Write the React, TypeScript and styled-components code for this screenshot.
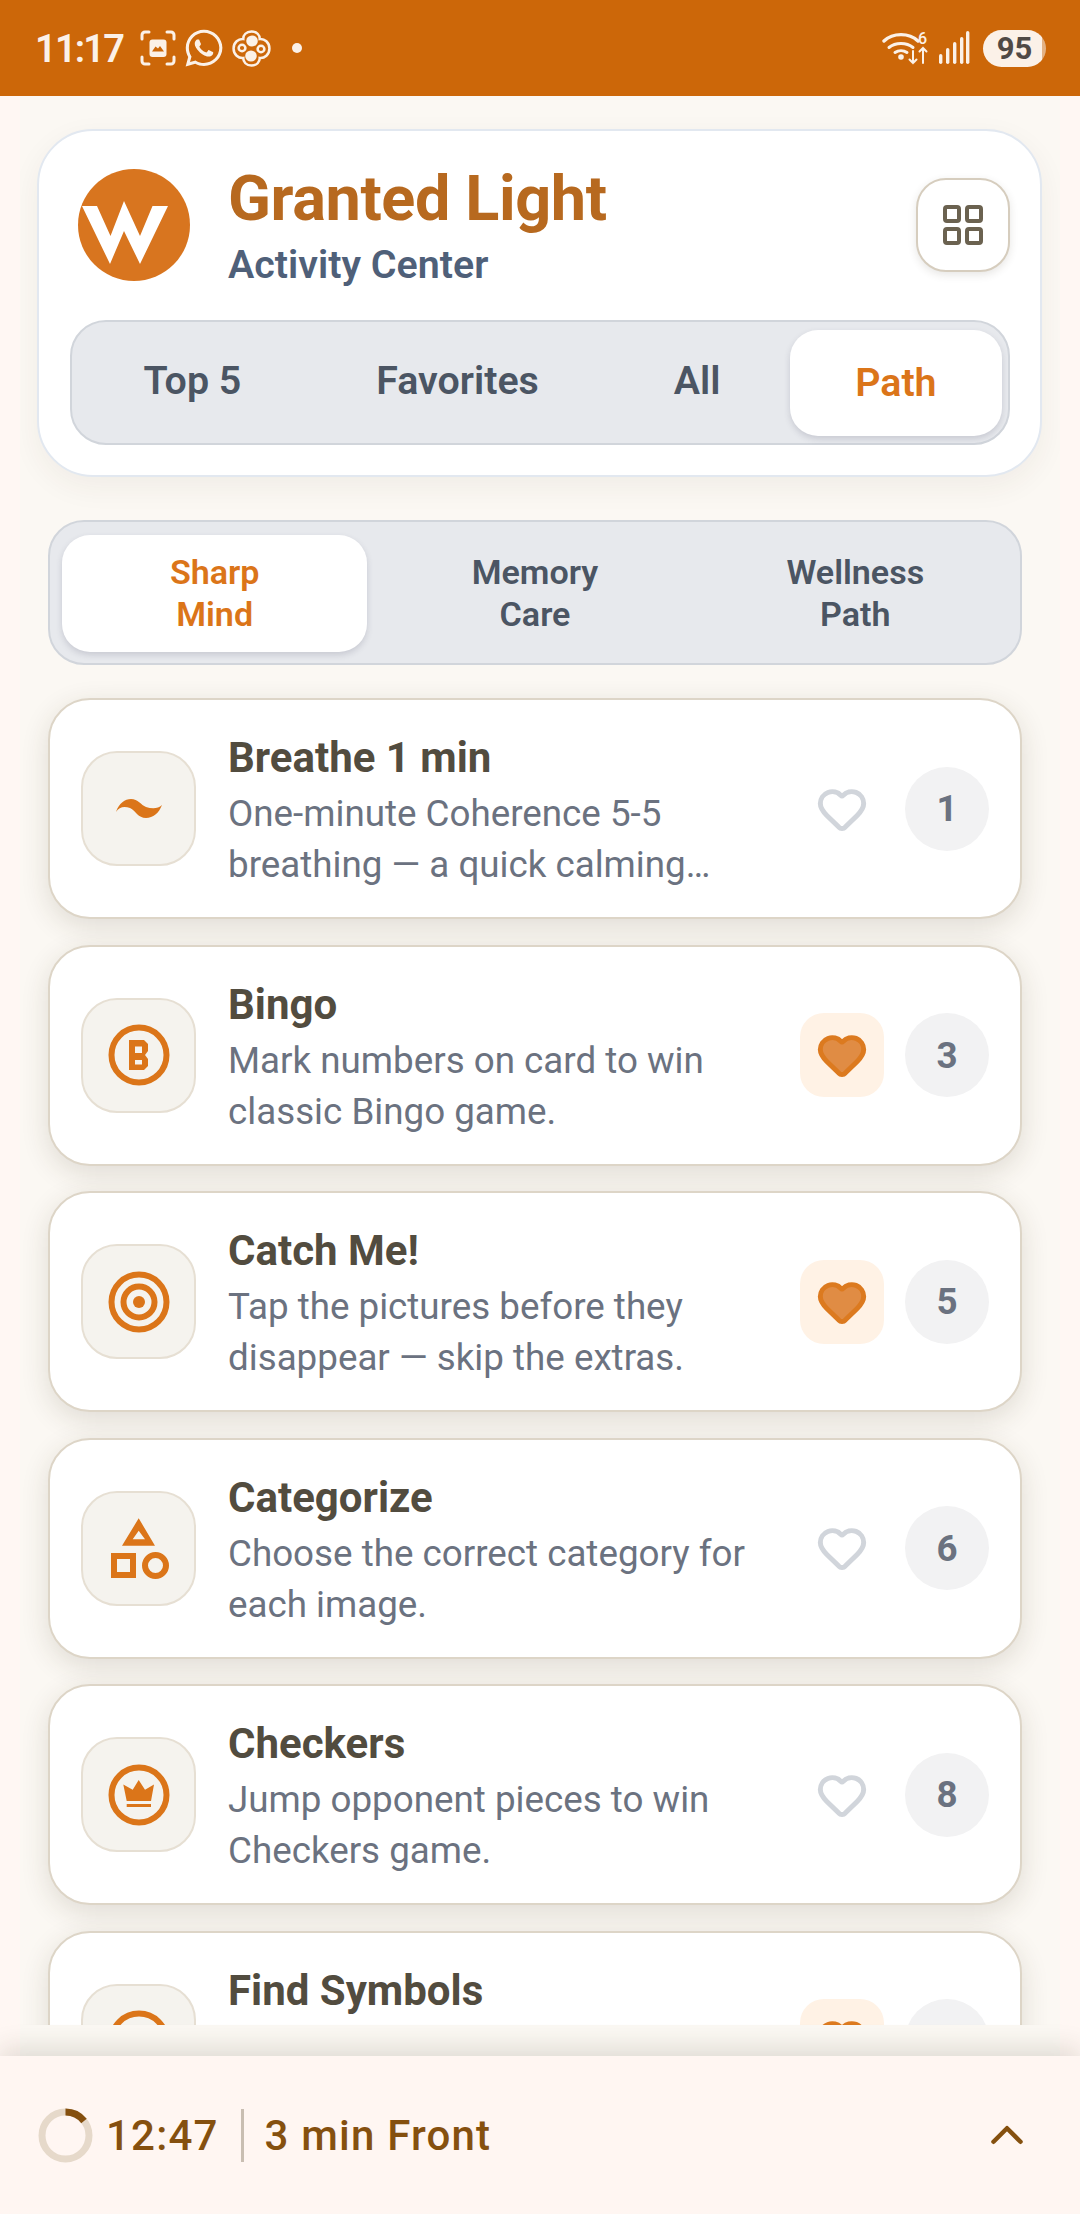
import React from 'react';
import styled, {createGlobalStyle} from 'styled-components';
import {ChevronUp, Heart, LayoutGrid} from 'lucide-react';
import {FaWhatsapp} from 'react-icons/fa';

const orange = '#DB7519';
const brown = '#85500F';
const slate = '#4B5563';

const GlobalStyle = createGlobalStyle`
  html, body {
    margin: 0;
    padding: 0;
    background: #FFF7F3;
  }
  * {
    box-sizing: border-box;
  }
`;

const Screen = styled.div`
  width: 1080px;
  height: 2214px;
  display: flex;
  flex-direction: column;
  overflow: hidden;
  font-family: Roboto, "Liberation Sans", sans-serif;
  background: #FFF7F3;
`;

const StatusBar = styled.div`
  height: 96px;
  flex: none;
  display: flex;
  align-items: center;
  padding: 0 34px 0 35px;
  background: #CC6709;
  color: #FBF1E8;
`;

const Clock = styled.div`
  width: 86px;
  font-size: 38px;
  font-weight: 600;
  letter-spacing: -1.8px;
  margin-right: 19px;
  margin-top: 2px;
  white-space: nowrap;
`;

const StatusIcons = styled.div`
  display: flex;
  align-items: center;
  gap: 7px;
`;

const StatusDot = styled.div`
  width: 10px;
  height: 10px;
  border-radius: 50%;
  background: #FBF1E8;
  margin-left: 21px;
`;

const StatusRight = styled.div`
  margin-left: auto;
  display: flex;
  align-items: center;
  gap: 9px;
`;

const Battery = styled.div`
  width: 63px;
  height: 37px;
  margin-left: 4px;
  border-radius: 19px;
  display: flex;
  align-items: center;
  justify-content: center;
  font-size: 31px;
  font-weight: 700;
  color: #504A46;
  background: linear-gradient(90deg, #FBF1E8 94%, #E3B285 94%);
`;

const Main = styled.div`
  flex: 1;
  min-height: 0;
  margin: 0 20px;
  display: flex;
  flex-direction: column;
  background: #FBF8F3;
`;

const Scroll = styled.div`
  flex: 1;
  min-height: 0;
  overflow: hidden;
  padding: 33px 18px 0 17px;
`;

const BottomStrip = styled.div`
  flex: none;
  height: 31px;
  background: #FBF8F3;
`;

const HeaderCard = styled.div`
  height: 348px;
  padding: 38px 30px 30px 31px;
  background: #fff;
  border: 2px solid #E2E8F0;
  border-radius: 56px;
  box-shadow: 0 10px 30px rgba(60, 50, 30, 0.06);
`;

const HeaderTop = styled.div`
  display: flex;
  align-items: flex-start;
  height: 112px;
  margin-left: 8px;
`;

const Titles = styled.div`
  margin-left: 38px;
  flex: 1;
`;

const Title = styled.div`
  font-size: 63px;
  line-height: 62px;
  font-weight: 700;
  letter-spacing: -0.4px;
  color: #B7691F;
  margin-top: -1px;
`;

const Subtitle = styled.div`
  font-size: 39.4px;
  line-height: 48px;
  font-weight: 600;
  color: #4F6079;
  margin-top: 11px;
`;

const GridButton = styled.div`
  width: 94px;
  height: 94px;
  margin: 9px 0 0 0;
  border-radius: 30px;
  border: 2px solid #D6CDBE;
  background: #fff;
  display: flex;
  align-items: center;
  justify-content: center;
  color: #6B6250;
  box-shadow: 0 3px 8px rgba(60, 50, 30, 0.12);
`;

const MainTabs = styled.div`
  margin-top: 39px;
  height: 125px;
  display: flex;
  gap: 4px;
  padding: 8px 6px 7px 6px;
  background: #E7E9ED;
  border: 2px solid #D1D5DB;
  border-radius: 36px;
`;

const MainTab = styled.div<{$active?: boolean}>`
  flex: 1 1 auto;
  display: flex;
  align-items: center;
  justify-content: center;
  padding: 0 58px ${p => (p.$active ? '2px' : '5px')};
  border-radius: 28px;
  font-size: 39.4px;
  font-weight: 600;
  color: ${p => (p.$active ? orange : slate)};
  background: ${p => (p.$active ? '#fff' : 'transparent')};
  box-shadow: ${p => (p.$active ? '0 3px 6px rgba(60, 60, 90, 0.18)' : 'none')};
`;

const SubTabs = styled.div`
  margin: 43px 0 0 11px;
  width: 974px;
  height: 145px;
  display: grid;
  grid-template-columns: repeat(3, 1fr);
  gap: 15px;
  padding: 13px 12px 11px 12px;
  background: #E7E9ED;
  border: 2px solid #D1D5DB;
  border-radius: 36px;
`;

const SubTab = styled.div<{$active?: boolean}>`
  display: flex;
  align-items: center;
  justify-content: center;
  text-align: center;
  padding-bottom: 2px;
  border-radius: 28px;
  font-size: 34.1px;
  line-height: 42px;
  font-weight: 600;
  color: ${p => (p.$active ? orange : slate)};
  background: ${p => (p.$active ? '#fff' : 'transparent')};
  box-shadow: ${p => (p.$active ? '0 3px 6px rgba(60, 60, 90, 0.18)' : 'none')};
`;

const Cards = styled.div`
  margin: 33px 0 0 11px;
  width: 974px;
  display: flex;
  flex-direction: column;
  gap: 25.6px;
`;

const Card = styled.div`
  height: 221px;
  flex: none;
  display: flex;
  align-items: center;
  padding: 0 31px 0 31px;
  background: #fff;
  border: 2px solid #DDD5C7;
  border-radius: 42px;
  box-shadow: 0 8px 28px rgba(60, 50, 30, 0.14);
`;

const IconBox = styled.div`
  width: 115px;
  height: 115px;
  flex: none;
  display: flex;
  align-items: center;
  justify-content: center;
  background: #F5F3EE;
  border: 2px solid #E6DFD3;
  border-radius: 36px;
  color: ${orange};
`;

const CardText = styled.div`
  flex: 1;
  min-width: 0;
  align-self: flex-start;
  margin: 33px 0 0 32px;
`;

const CardTitle = styled.div`
  font-size: 42px;
  line-height: 50px;
  font-weight: 700;
  color: #524C3F;
  margin-bottom: 5px;
`;

const CardDesc = styled.div`
  font-size: 36.75px;
  line-height: 51px;
  color: #6B7280;
  white-space: nowrap;
`;

const HeartBox = styled.div<{$on?: boolean}>`
  width: 84px;
  height: 84px;
  flex: none;
  display: flex;
  align-items: center;
  justify-content: center;
  border-radius: 24px;
  background: ${p => (p.$on ? '#FFF2E5' : 'transparent')};
  color: ${p => (p.$on ? '#DC7A1F' : '#D1D5DB')};
`;

const Rank = styled.div`
  width: 84px;
  height: 84px;
  flex: none;
  margin-left: 21px;
  display: flex;
  align-items: center;
  justify-content: center;
  border-radius: 50%;
  background: #F2F2F3;
  color: #6B7280;
  font-size: 36.75px;
  font-weight: 700;
`;

const Footer = styled.div`
  height: 158px;
  flex: none;
  position: relative;
  display: flex;
  align-items: center;
  padding: 0 46px 0 38px;
  background: #FFF6F2;
  color: ${brown};
  box-shadow: 0 -8px 24px rgba(60, 50, 30, 0.14);
  font-size: 42px;
  font-weight: 500;
  letter-spacing: 1.2px;
`;

const FooterTime = styled.div`
  margin-left: 13px;
`;

const FooterDivider = styled.div`
  width: 3px;
  height: 53px;
  margin: 0 21px 0 22px;
  background: #C9BEB2;
`;

const FooterChevron = styled.div`
  margin-left: auto;
  display: flex;
`;

const ScreenshotIcon = () => (
  <svg width="36" height="36" viewBox="0 0 36 36" fill="none" stroke="currentColor" strokeWidth="3" strokeLinecap="round">
    <path d="M2 9V5a3 3 0 0 1 3-3h4M27 2h4a3 3 0 0 1 3 3v4M34 27v4a3 3 0 0 1-3 3h-4M9 34H5a3 3 0 0 1-3-3v-4"/>
    <rect x="9.500" y="9.500" width="17" height="17.500" rx="3" fill="currentColor" stroke="none"/>
    <path d="M12 21.500l3.500-5 2.500 2 2-2.500 4 5.500z" fill="#CC6709" stroke="none"/>
  </svg>
);

const PetalIcon = () => (
  <svg width="39" height="37" viewBox="0 0 37 37" fill="none" stroke="currentColor" strokeWidth="2.400" preserveAspectRatio="none">
    <path d="M18.500 1.500c5 0 8 3.500 7.800 7.600 4.500-.4 9.200 3 9.200 9.400s-4.700 9.800-9.200 9.400c.2 4.100-2.800 7.600-7.800 7.600s-8-3.500-7.800-7.600C6.200 28.300 1.500 24.900 1.500 18.500S6.200 8.700 10.700 9.100C10.500 5 13.500 1.500 18.500 1.500z"/>
    <circle cx="19" cy="11" r="5.500" fill="currentColor" stroke="none"/>
    <circle cx="18" cy="26" r="5.500" fill="currentColor" stroke="none"/>
    <circle cx="9.500" cy="18" r="3.200"/>
    <circle cx="27.500" cy="19" r="3.200"/>
  </svg>
);

const WifiIcon = () => (
  <svg width="47" height="36" viewBox="0 0 47 36" fill="none" stroke="currentColor" strokeLinecap="round">
    <path d="M2 11c9-8.500 25-8.500 34 0" strokeWidth="3.400"/>
    <path d="M7 17.500c6.500-5.500 17.500-5.500 24 0" strokeWidth="3"/>
    <path d="M13 22.500c3.500-2.500 8.500-2.500 12 0" strokeWidth="3"/>
    <circle cx="19" cy="27" r="2.800" fill="currentColor" stroke="none"/>
    <path d="M31 21v12M27.500 29.500l3.500 3.500 3.500-3.500M41 33V18M37.500 21.500l3.500-3.500 3.500 3.500" strokeWidth="2"/>
    <text x="36" y="14" fontSize="16" fontWeight="500" fontFamily="Roboto, sans-serif" fill="currentColor" stroke="none">6</text>
  </svg>
);

const SignalIcon = () => (
  <svg width="32" height="36" viewBox="0 0 32 36" fill="currentColor">
    <rect x="1" y="24" width="3.400" height="10" rx="1.700"/>
    <rect x="8" y="18" width="3.400" height="16" rx="1.700"/>
    <rect x="15" y="12" width="3.400" height="22" rx="1.700"/>
    <rect x="22" y="7" width="3.400" height="27" rx="1.700"/>
    <rect x="28" y="1" width="3.400" height="33" rx="1.700"/>
  </svg>
);

const BreatheIcon = () => (
  <svg width="62" height="62" viewBox="0 0 62 62" fill="currentColor">
    <path d="M8 34C11 25 17 21 23 21C30 21 33 27 38 29C44 31 50 31 54 27C51 35 45 40 38 40C30 40 28 33 22 30C16 28 11 29 8 34z"/>
  </svg>
);

const BingoIcon = () => (
  <svg width="62" height="62" viewBox="0 0 62 62">
    <circle cx="31" cy="31" r="27.500" fill="none" stroke="currentColor" strokeWidth="6"/>
    <path fillRule="evenodd" fill="currentColor" d="M21 16H36L40 20V27L37 31L40 35V42L36 46H21zM27 22.500V29H34V22.500zM27 36V40.500H34V36z"/>
  </svg>
);

const TargetIcon = () => (
  <svg width="62" height="62" viewBox="0 0 62 62" fill="none" stroke="currentColor" strokeWidth="6">
    <circle cx="31" cy="31" r="27.500"/>
    <circle cx="31" cy="31" r="15.500"/>
    <circle cx="31" cy="31" r="6" fill="currentColor" stroke="none"/>
  </svg>
);

const ShapesIcon = () => (
  <svg width="62" height="62" viewBox="0 0 62 62" fill="none" stroke="currentColor" strokeWidth="6">
    <path fillRule="evenodd" fill="currentColor" stroke="none" d="M30.700 1.300L47 28.700H14zM30.700 13.700L24.700 22.300H37z"/>
    <rect x="6" y="39" width="19" height="19"/>
    <circle cx="47.500" cy="48.500" r="10.500"/>
  </svg>
);

const CrownIcon = () => (
  <svg width="62" height="62" viewBox="0 0 62 62">
    <circle cx="31" cy="31" r="27.500" fill="none" stroke="currentColor" strokeWidth="6"/>
    <path fill="currentColor" d="M15.300 20.500L24.700 25.700L30.700 16L37 25.700L46 20.500L43 37H18.700zM18.700 40H43V43H18.700z"/>
  </svg>
);

const Logo = () => (
  <svg width="112" height="112" viewBox="0 0 112 112">
    <circle cx="56" cy="56" r="56" fill="#D8751F"/>
    <path fill="#fff" d="M4 37H19L32.500 67L46 32L62 67L74.500 37H90L62 95L46 62L32 95z"/>
  </svg>
);

const rows = [
  {title: 'Breathe 1 min', desc: ['One-minute Coherence 5-5', 'breathing — a quick calming…'], icon: <BreatheIcon/>, fav: false, rank: 1},
  {title: 'Bingo', desc: ['Mark numbers on card to win', 'classic Bingo game.'], icon: <BingoIcon/>, fav: true, rank: 3},
  {title: 'Catch Me!', desc: ['Tap the pictures before they', 'disappear — skip the extras.'], icon: <TargetIcon/>, fav: true, rank: 5},
  {title: 'Categorize', desc: ['Choose the correct category for', 'each image.'], icon: <ShapesIcon/>, fav: false, rank: 6},
  {title: 'Checkers', desc: ['Jump opponent pieces to win', 'Checkers game.'], icon: <CrownIcon/>, fav: false, rank: 8},
  {title: 'Find Symbols', desc: [], icon: <BingoIcon/>, fav: true, rank: null},
];

export default function App() {
  return (
    <Screen>
      <GlobalStyle/>
      <StatusBar>
        <Clock>11:17</Clock>
        <StatusIcons>
          <ScreenshotIcon/>
          <FaWhatsapp size={42}/>
          <PetalIcon/>
        </StatusIcons>
        <StatusDot/>
        <StatusRight>
          <WifiIcon/>
          <SignalIcon/>
          <Battery>95</Battery>
        </StatusRight>
      </StatusBar>
      <Main>
        <Scroll>
          <HeaderCard>
            <HeaderTop>
              <Logo/>
              <Titles>
                <Title>Granted Light</Title>
                <Subtitle>Activity Center</Subtitle>
              </Titles>
              <GridButton><LayoutGrid size={48} strokeWidth={2}/></GridButton>
            </HeaderTop>
            <MainTabs>
              <MainTab>Top 5</MainTab>
              <MainTab>Favorites</MainTab>
              <MainTab>All</MainTab>
              <MainTab $active>Path</MainTab>
            </MainTabs>
          </HeaderCard>
          <SubTabs>
            <SubTab $active>Sharp<br/>Mind</SubTab>
            <SubTab>Memory<br/>Care</SubTab>
            <SubTab>Wellness<br/>Path</SubTab>
          </SubTabs>
          <Cards>
            {rows.map(row => (
              <Card key={row.title}>
                <IconBox>{row.icon}</IconBox>
                <CardText>
                  <CardTitle>{row.title}</CardTitle>
                  {row.desc.map(line => <CardDesc key={line}>{line}</CardDesc>)}
                </CardText>
                <HeartBox $on={row.fav}>
                  <Heart size={52} strokeWidth={2.3} fill={row.fav ? '#E08C44' : 'none'}/>
                </HeartBox>
                <Rank>{row.rank}</Rank>
              </Card>
            ))}
          </Cards>
        </Scroll>
        <BottomStrip/>
      </Main>
      <Footer>
        <svg width="55" height="55" viewBox="0 0 55 55" fill="none" strokeWidth="7">
          <circle cx="27.500" cy="27.500" r="23.500" stroke="#E6D9CA"/>
          <path d="M27.500 4A23.500 23.500 0 0 1 46 13" stroke={brown}/>
        </svg>
        <FooterTime>12:47</FooterTime>
        <FooterDivider/>
        <div>3 min Front</div>
        <FooterChevron><ChevronUp size={54} strokeWidth={2}/></FooterChevron>
      </Footer>
    </Screen>
  );
}
